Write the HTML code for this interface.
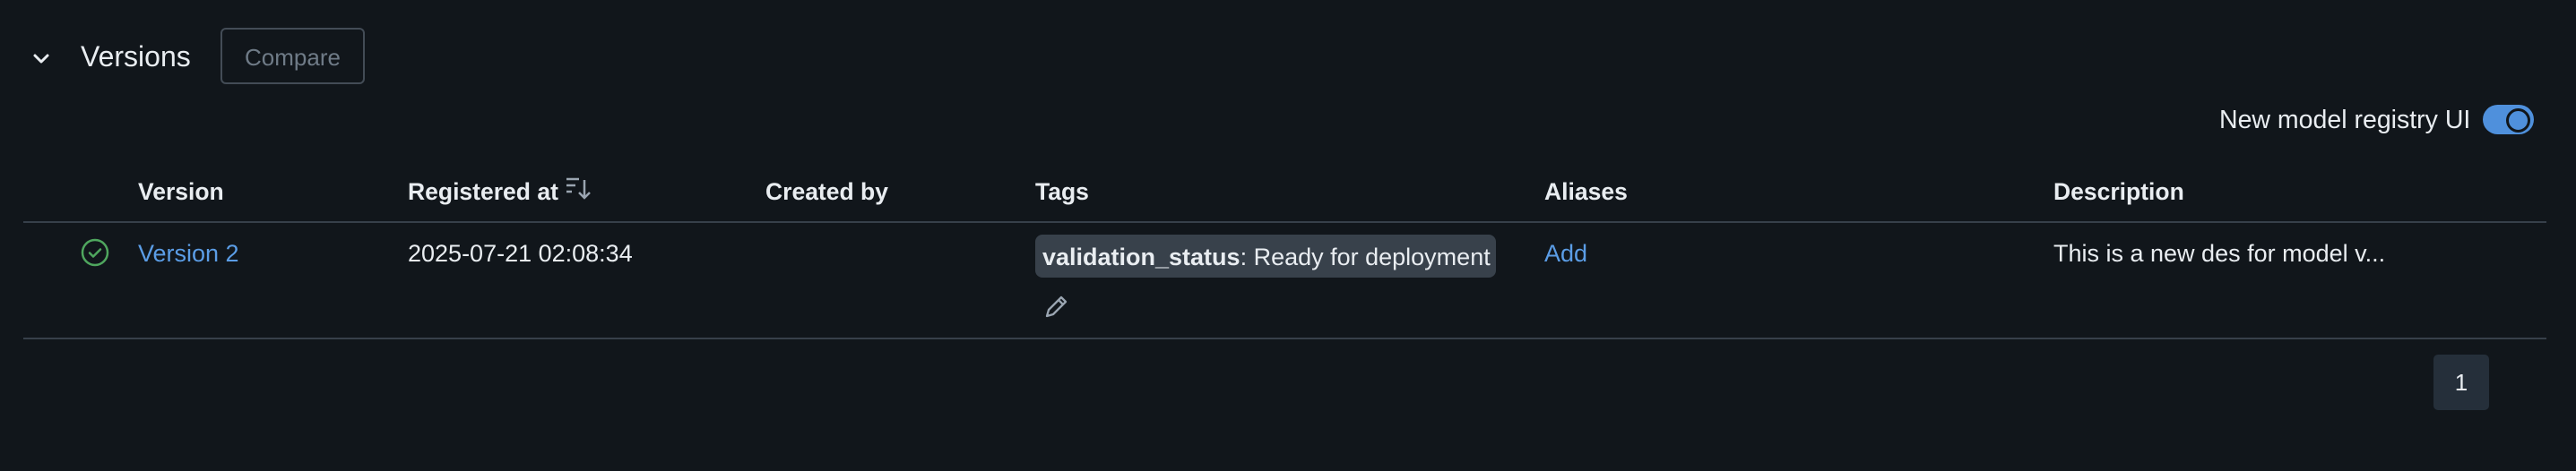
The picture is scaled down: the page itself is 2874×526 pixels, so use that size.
<!DOCTYPE html>
<html><head><style>
html,body{margin:0;padding:0;background:#11161b;width:2874px;height:526px;overflow:hidden;font-family:"Liberation Sans",sans-serif;color:#e9edf1}
.a{position:absolute;white-space:nowrap}
.h{font-size:26.5px;font-weight:bold;top:199px}
.c{font-size:27px;top:268px}
.line{position:absolute;left:26px;width:2815px;height:2px;background:#37404a}
</style></head><body>
<svg class="a" style="left:34px;top:56px" width="24" height="20" viewBox="0 0 24 20"><path d="M5 6l7 7 7-7" fill="none" stroke="#e9edf1" stroke-width="3" stroke-linecap="round" stroke-linejoin="round"/></svg>
<div class="a" style="left:90px;top:45px;font-size:32px">Versions</div>
<div class="a" style="left:246px;top:31px;width:161px;height:63px;border:2px solid #434c56;border-radius:6px;box-sizing:border-box;color:#6f7b87;font-size:26px;line-height:63px;text-align:center">Compare</div>
<div class="a" style="left:2476px;top:118px;font-size:28.5px">New model registry UI</div>
<div class="a" style="left:2770px;top:117px;width:57px;height:33px;border-radius:17px;background:#4f90dc"></div>
<div class="a" style="left:2796px;top:121px;width:21px;height:21px;border-radius:50%;border:3px solid #11161b;background:#4f90dc"></div>
<div class="a h" style="left:154px">Version</div>
<div class="a h" style="left:455px">Registered at</div>
<svg class="a" style="left:630px;top:197px" width="32" height="28" viewBox="0 0 32 28"><path d="M2 3h14M2 10h10M2 17h6M22 4v20M16 18l6 6 6-6" fill="none" stroke="#9aa5b1" stroke-width="2.5"/></svg>
<div class="a h" style="left:854px">Created by</div>
<div class="a h" style="left:1155px">Tags</div>
<div class="a h" style="left:1723px">Aliases</div>
<div class="a h" style="left:2291px">Description</div>
<div class="line" style="top:247px"></div>
<svg class="a" style="left:89px;top:265px" width="34" height="34" viewBox="0 0 34 34"><circle cx="17" cy="17" r="14" fill="none" stroke="#4fa65e" stroke-width="2.5"/><path d="M11 17.5l4 4 8-8" fill="none" stroke="#4fa65e" stroke-width="2.5" stroke-linecap="round" stroke-linejoin="round"/></svg>
<div class="a c" style="left:154px;color:#5b9de6">Version 2</div>
<div class="a c" style="left:455px">2025-07-21 02:08:34</div>
<div class="a" style="left:1155px;top:262px;width:514px;height:48px;background:#38414b;border-radius:8px;font-size:27px;line-height:50px;padding-left:8px;box-sizing:border-box"><b>validation_status</b>: Ready for deployment</div>
<svg class="a" style="left:1163px;top:326px" width="32" height="32" viewBox="0 0 32 32"><path d="M5 27l2-7L21 6l5 5-14 14z M18 9l5 5" fill="none" stroke="#9aa5b1" stroke-width="2.3" stroke-linejoin="round"/></svg>
<div class="a c" style="left:1723px;color:#5b9de6">Add</div>
<div class="a c" style="left:2291px">This is a new des for model v...</div>
<div class="line" style="top:377px"></div>
<div class="a" style="left:2715px;top:396px;width:62px;height:62px;background:#252f3a;border-radius:5px;font-size:26px;line-height:62px;text-align:center">1</div>
</body></html>
